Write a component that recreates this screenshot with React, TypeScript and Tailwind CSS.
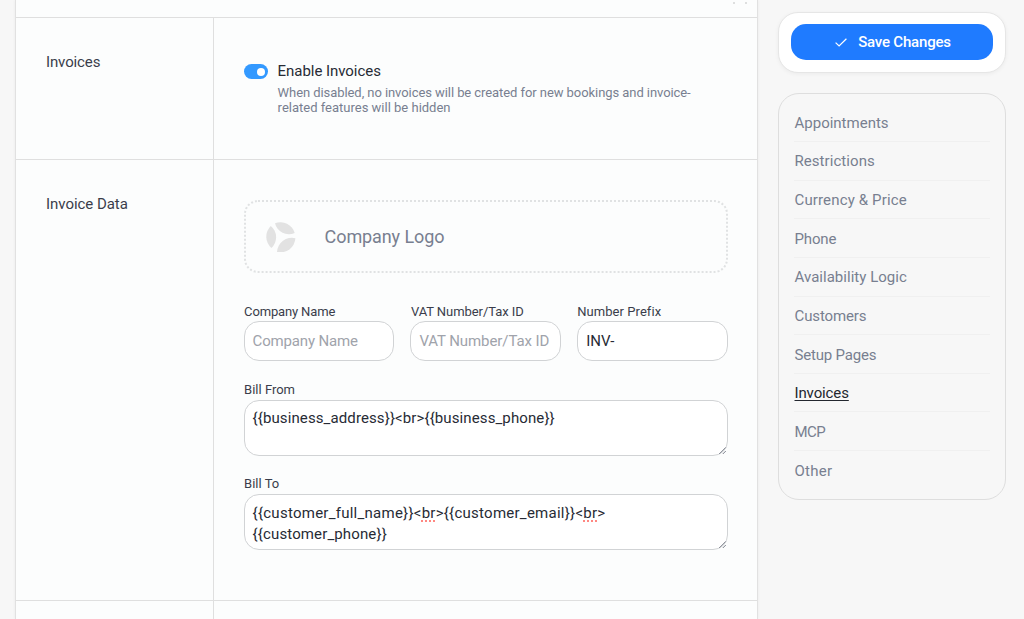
import React from 'react'

interface NavItem {
    label: string,
    active?: boolean,
    className: string
}

const navItems: NavItem[] = [
    { label: "Appointments", className: "tracking-[0px]" },
    { label: "Restrictions", className: "tracking-[0.06px]" },
    { label: "Currency & Price", className: "tracking-[0.14px]" },
    { label: "Phone", className: "tracking-[-0.14px]" },
    { label: "Availability Logic", className: "tracking-[0.03px]" },
    { label: "Customers", className: "tracking-[-0.13px]" },
    { label: "Setup Pages", className: "tracking-[-0.18px]" },
    { label: "Invoices", active: true, className: "tracking-[-0.12px]" },
    { label: "MCP", className: "tracking-[-0.55px]" },
    { label: "Other", className: "tracking-[0.28px]" },
]

const LogoPlaceholder: React.FC = () => (
    <svg className="w-[30px] h-[30px] shrink-0" viewBox="0 0 30 30" fill="#e2e2e2">
        <path d="M4.8 4A15 15 0 0 0 5.4 26A14.6 14.6 0 0 0 4.8 4Z" />
        <path d="M9 1.2A15 15 0 0 1 28.7 11A14.2 14.2 0 0 1 9 1.2Z" />
        <path d="M11 30A15 15 0 0 0 29.4 16.2A15 15 0 0 0 11 30Z" />
    </svg>
)

const ResizeHandle: React.FC = () => (
    <svg className="absolute right-0 bottom-0 w-[9px] h-[9px]" viewBox="0 0 9 9" stroke="#6f7480" strokeWidth="0.9">
        <path d="M1.2 8L7.8 1.4M4.8 8L7.8 5" fill="none" />
    </svg>
)

const SaveCard: React.FC = () => (
    <div className="h-[61px] px-3 pt-[11px] rounded-[20px] border border-[#e6e6e6] bg-white shadow-[0_1px_4px_rgba(0,0,0,0.05)]">
        <button className="flex items-center justify-center w-full h-9 pl-[2px] pt-[1px] rounded-[15px] bg-[#1f7bff] text-white text-[15px] font-medium">
            <svg className="w-3 h-[9px] mr-[11px]" viewBox="0 0 12 9" fill="none" stroke="white" strokeWidth="1.2">
                <path d="M0.6 4.6L4.1 8L11.4 0.8" />
            </svg>
            <span className="tracking-[-0.2px]">Save Changes</span>
        </button>
    </div>
)

const SideNav: React.FC = () => (
    <nav className="h-[407px] mt-5 px-[15px] pt-[9.3px] rounded-[21px] border border-[#dedede]">
        {navItems.map((item) => (
            <div key={item.label} className="flex items-center h-[38.65px] pl-[0.5px] pt-[1.6px] border-b border-[#f0f0f0] last:border-b-0 text-[15px]">
                <a className={item.active ? "text-[#23272f] underline underline-offset-2" : "text-[#787f90]"}>
                    <span className={item.className}>{item.label}</span>
                </a>
            </div>
        ))}
    </nav>
)

const App: React.FC = () => {
    return (
        <div className="flex w-[1024px] h-[619px] overflow-hidden bg-[#f7f7f7] pl-[15px] font-['Roboto','Liberation_Sans',sans-serif] text-[#272b35]">
            <main className="w-[743px] h-full shrink-0 flex flex-col border-x border-[#e1e1e1] bg-[#fcfdfd] shadow-[0_0_3px_rgba(0,0,0,0.06)]">
                {/* bottom of the previous section */}
                <div className="flex justify-end gap-[10px] h-[17px] shrink-0 pr-[10px] pt-[2px]">
                    <span className="w-[2px] h-[2px] rounded-full bg-[#d5d5d5]" />
                    <span className="w-[2px] h-[2px] rounded-full bg-[#d5d5d5]" />
                </div>

                <section className="flex h-[142px] shrink-0 border-t border-[#dfdfdf]">
                    <div className="w-[198px] shrink-0 border-r border-[#dfdfdf] pl-[30px] pt-[34px] text-[15px] leading-[21px] text-[#3a3d4b]">
                        <span className="tracking-[-0.12px]">Invoices</span>
                    </div>
                    <div className="flex pl-[29.6px] pt-[43px]">
                        <div className="flex items-center justify-end w-6 h-[15px] mt-[3px] pr-[3px] rounded-full bg-[#3399ff]">
                            <div className="w-2 h-2 rounded-full bg-white" />
                        </div>
                        <div className="ml-[10px]">
                            <div className="text-[15px] leading-[21px]"><span className="tracking-[-0.05px]">Enable Invoices</span></div>
                            <div className="mt-[3px] text-[13px] leading-[15px] text-[#787f90] whitespace-nowrap">
                                <span className="tracking-[-0.07px]">When disabled, no invoices will be created for new bookings and invoice-</span><br />
                                <span>related features will be hidden</span>
                            </div>
                        </div>
                    </div>
                </section>

                <section className="flex h-[441px] shrink-0 border-t border-[#dfdfdf]">
                    <div className="w-[198px] shrink-0 border-r border-[#dfdfdf] pl-[30px] pt-[34px] text-[15px] leading-[21px] text-[#3a3d4b]">
                        <span className="tracking-[-0.04px]">Invoice Data</span>
                    </div>
                    <div className="w-[514px] pl-[29.6px] pt-[40px]">
                        <div className="flex items-center h-[73px] pl-[20px] rounded-[14px] border-2 border-dotted border-[#e0e2e3]">
                            <LogoPlaceholder />
                            <span className="ml-[29px] text-[18px] text-[#787f90]"><span className="tracking-[-0.1px]">Company Logo</span></span>
                        </div>

                        <div className="grid grid-cols-3 gap-4 mt-[29px]">
                            <div>
                                <label className="block h-[19px] pl-[0.5px] text-[13px] leading-[19px] text-[#3a3d4b]"><span className="tracking-[-0.15px]">Company Name</span></label>
                                <div className="flex items-center h-10 px-2 pt-[1px] rounded-[15px] border border-[#d1d3d5] bg-white text-[15px] text-[#a0a3ab] whitespace-nowrap"><span className="tracking-[-0.16px]">Company Name</span></div>
                            </div>
                            <div>
                                <label className="block h-[19px] pl-[0.5px] text-[13px] leading-[19px] text-[#3a3d4b]"><span className="tracking-[-0.06px]">VAT Number/Tax ID</span></label>
                                <div className="flex items-center h-10 px-2 pt-[1px] rounded-[15px] border border-[#d1d3d5] bg-white text-[15px] text-[#a0a3ab] whitespace-nowrap"><span className="tracking-[-0.09px]">VAT Number/Tax ID</span></div>
                            </div>
                            <div>
                                <label className="block h-[19px] text-[13px] leading-[19px] text-[#3a3d4b]"><span className="tracking-[0.06px]">Number Prefix</span></label>
                                <div className="flex items-center h-10 px-2 pt-[1px] rounded-[15px] border border-[#d1d3d5] bg-white text-[15px] whitespace-nowrap">INV-</div>
                            </div>
                        </div>

                        <label className="block h-[19px] mt-5 pl-[0.5px] text-[13px] leading-[17px] text-[#3a3d4b]">Bill From</label>
                        <div className="relative h-14 px-2 pt-[7px] rounded-[15px] border border-[#d1d3d5] bg-white text-[15px] leading-[21px] whitespace-nowrap">
                            <span className="tracking-[0.107px]">{"{{business_address}}<br>{{business_phone}}"}</span>
                            <ResizeHandle />
                        </div>

                        <label className="block h-[19px] mt-[19px] pl-[0.5px] text-[13px] leading-[17px] text-[#3a3d4b]">Bill To</label>
                        <div className="relative h-14 px-2 pt-[8px] rounded-[15px] border border-[#d1d3d5] bg-white text-[15px] leading-[21px] whitespace-nowrap">
                            <span className="tracking-[0.256px]">
                                {"{{customer_full_name}}<"}
                                <span className="underline decoration-dotted decoration-[#ff6259] underline-offset-3">br</span>
                                {">{{customer_email}}<"}
                                <span className="underline decoration-dotted decoration-[#ff6259] underline-offset-3">br</span>
                                {">"}
                            </span>
                            <br />
                            <span className="tracking-[0.13px]">{"{{customer_phone}}"}</span>
                            <ResizeHandle />
                        </div>
                    </div>
                </section>

                <section className="flex h-5 shrink-0 border-t border-[#dfdfdf]">
                    <div className="w-[198px] border-r border-[#dfdfdf]" />
                </section>
            </main>

            <aside className="w-[228px] ml-[20px] pt-3">
                <SaveCard />
                <SideNav />
            </aside>
        </div>
    )
}

export default App
